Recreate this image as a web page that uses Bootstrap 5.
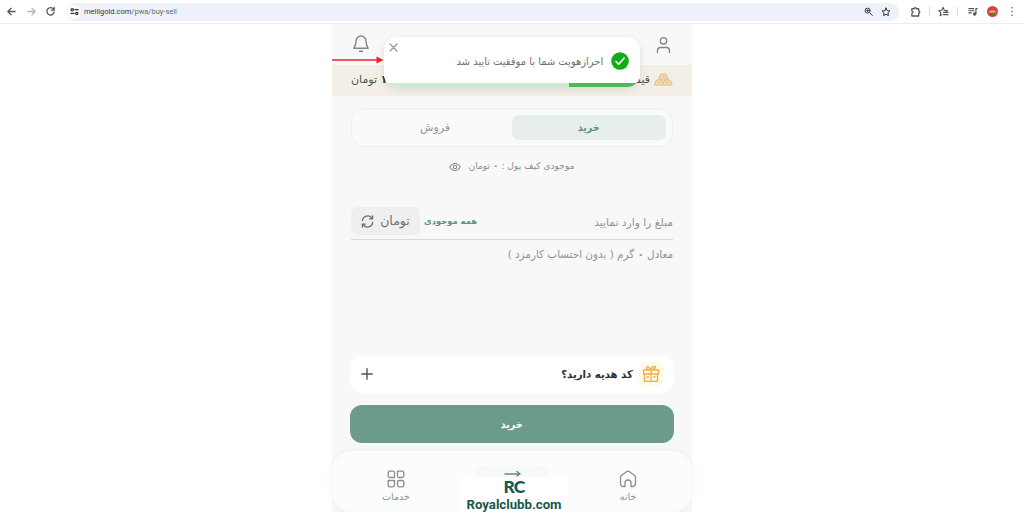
<!DOCTYPE html>
<html lang="fa">
<head>
<meta charset="utf-8">
<meta name="viewport" content="width=device-width, initial-scale=1">
<title>melligold</title>
<link href="https://cdn.jsdelivr.net/npm/bootstrap@5.3.0/dist/css/bootstrap.min.css" rel="stylesheet">
<script src="https://cdn.jsdelivr.net/npm/bootstrap@5.3.0/dist/js/bootstrap.bundle.min.js" defer></script>
<style>
body{height:512px;overflow:hidden;background:#fff;font-family:"DejaVu Sans",sans-serif;font-size:11px;line-height:1;color:#8a8a8a}
svg{display:block;flex:none;fill:none;stroke:currentColor;stroke-width:1.4;stroke-linecap:round;stroke-linejoin:round}
.chrome{height:24px;border-bottom:1px solid #ededee;color:#56585d;padding:0 7px 0 6px}
.address{height:18px;border-radius:9px;background:#edf1fa;margin-left:10px;padding:0 8px 0 1px;font:7.5px Roboto,sans-serif;color:#35363b}
.site-info{width:14px;height:14px;border-radius:50%;background:#fff;margin-right:3px}
.divider{width:1px;height:9px;background:#d4dae6}
.phone{width:360px;height:488px;background:#f8f8f8}
.topbar{height:41px;padding:0 20px;color:#858585}
.price{height:31px;background:#f3efe7;padding:0 19px 2px;color:#555}
.tabs{height:39px;margin:12px 19px 0;border:1px solid #eeefef;border-radius:13px;background:#f9fafa;padding:6px;color:#969696}
.tab-on{background:#e7efec;border-radius:7px;color:#5f9580}
.wallet{height:39px;font-size:9.1px;color:#8c8c8c;gap:7px}
.amount{height:33px;margin:21px 19px 0;border-bottom:1px solid #d8d8d8;color:#929292}
.unit{height:28px;width:69px;border-radius:7px;background:#efefef;color:#707070;font-size:12.500px;gap:6px}
.all{color:#5d927e;font-size:8.4px}
.equal{margin:0 19px;height:28px;color:#929292}
.gift{height:38px;margin:87px 18px 0;background:#fff;border-radius:13px;color:#303030;padding:0 11px 0 17px}
.gift-icon{width:24px;height:24px;background:#fff9e9;border-radius:6px;color:#f3ad40}
.buy{height:38px;margin:12px 18px 0;border-radius:12px;background:#6c9c89;color:#fff;border:0}
.bottom{height:61px;margin-top:8px;padding:15px 36px 0;background:#fbfdfc;border-radius:20px;box-shadow:0 0 8px #0000000c;color:#8c8c8c;font-size:9.500px}
.nav-cell{width:56px;gap:4px;padding-top:4px}
.trade{width:74px;height:46px;border-radius:10px;background:#f6f9f8;color:#5c927e;padding-top:4px}
.notice{left:384px;top:37px;width:256px;height:50px;border-radius:13px;background:#fff;box-shadow:0 2px 9px #0000001a;color:#707070;overflow:hidden;z-index:3;padding:0 11px 2px}
.bar{left:3px;right:4px;bottom:0;height:4px;background:#d0ecd0}
.bar i{display:block;width:67px;height:4px;background:#4bbd53;margin-left:auto}
.close-x{left:5px;top:6px;color:#999}
.pointer{left:332px;top:55px;z-index:4}
.stamp{left:461px;top:477px;width:106px;height:35px;background:#fff;color:#17584e;z-index:4;font:bold 13.2px/15px Roboto,sans-serif}
.monogram{font:900 17.500px/20px Lato,sans-serif;height:20px;letter-spacing:-.8px}
.fit{display:inline-block;white-space:nowrap}
.tight{transform:scaleX(.945);transform-origin:right}
.tighter{transform:scaleX(.92);transform-origin:right}
.mid{transform:scaleX(.86)}
</style>
</head>
<body class="position-relative">
<header class="chrome d-flex align-items-center">
 <svg width="11" height="11" viewBox="0 0 12 12"><path d="M10 6H2M5.500 2.500 2 6l3.500 3.500"/></svg>
 <svg style="margin-left:9px;color:#b5b6b8" width="11" height="11" viewBox="0 0 12 12"><path d="M2 6h8M6.500 2.500 10 6 6.500 9.500"/></svg>
 <svg style="margin-left:8px" width="11" height="11" viewBox="0 0 12 12"><path d="M9.300 3.500A4 4 0 1 0 10 6.500M10 1.500v3H7"/></svg>
 <div class="address flex-grow-1 d-flex align-items-center">
  <span class="site-info d-flex align-items-center justify-content-center"><svg width="9" height="9" viewBox="0 0 10 10"><circle cx="2.500" cy="3" r="1.300"/><path d="M5.500 3H9M1 7.200h3.500"/><circle cx="7.500" cy="7.200" r="1.300"/></svg></span>
  <span class="fit" dir="ltr">melligold.com<span style="color:#686b72">/pwa/buy-sell</span></span>
  <svg class="ms-auto" width="9" height="9" viewBox="0 0 10 10"><circle cx="4" cy="4" r="2.800" stroke-width="1.100"/><path stroke-width="1.100" d="M6.200 6.200 9.300 9.300M3 4h2M4 3v2"/></svg>
  <svg style="margin-left:8px" width="10" height="10" viewBox="0 0 12 12"><path stroke-width="1.200" d="m6 1.300 1.400 3 3.300.4-2.400 2.300.6 3.300L6 8.700l-2.900 1.600.6-3.300-2.400-2.300 3.300-.4z"/></svg>
 </div>
 <svg style="margin-left:11px" width="11" height="11" viewBox="0 0 12 12"><path d="M2 3h2.500a1.200 1.200 0 0 1 2.400 0H9.500v2.500a1.200 1.200 0 0 1 0 2.400v3H2V8a1.200 1.200 0 0 0 0-2.500z"/></svg>
 <span class="divider" style="margin-left:8px"></span>
 <svg style="margin-left:8px" width="11" height="11" viewBox="0 0 12 12"><path stroke-width="1.300" d="M4 9.500 2.400 10.500 3 7.200.9 5l3.200-.4L5.500 1.500l1.400 3.100 3.300.4-2 1.500M6 7h5M6 9.500h5"/></svg>
 <span class="divider" style="margin-left:8px"></span>
 <svg style="margin-left:10px" width="10" height="10" viewBox="0 0 12 12"><path d="M1 2h6M1 4.500h6M1 7h3M9.500 8V2H11"/><circle cx="8" cy="8.500" r="1.400" fill="currentColor"/></svg>
 <svg style="margin-left:9px" width="11" height="11" viewBox="0 0 12 12"><circle cx="6" cy="6" r="6" fill="#d8443a" stroke="none"/><path d="M1.500 7q4.500-5 9 0z" fill="#f8b468" stroke="none"/><path d="M2 8.500h8L8 11H4z" fill="#61753a" stroke="none"/></svg>
 <svg style="margin-left:9px" width="10" height="11" viewBox="0 0 10 12"><path stroke-width="1.700" d="M5 2v.01M5 6v.01M5 10v.01"/></svg>
</header>

<main class="phone mx-auto d-flex flex-column" dir="rtl">
 <div class="topbar flex-shrink-0 d-flex align-items-center justify-content-between">
  <svg width="17" height="18" viewBox="0 0 17 18"><circle cx="8.500" cy="4.800" r="3.200"/><path d="M2.500 16.500v-2q0-3 3-3h6q3 0 3 3v2"/></svg>
  <svg width="18" height="19" viewBox="0 0 18 19"><path d="M4 6a5 5 0 0 1 10 0c0 4 1 5.300 2.200 7.300H1.800C3 11.300 4 10 4 6zM7.500 16.200h3"/></svg>
 </div>
 <div class="price flex-shrink-0 d-flex align-items-center justify-content-between">
  <div class="d-flex align-items-center gap-1"><svg width="19" height="13" viewBox="0 0 19 13" style="color:#dfba82"><path fill="#f4dfbd" stroke-width="1" d="M7 1h5l2 5H5zM3 7h5l2 5H.8zM11 7h5l2.200 5H9.500zM8 3.500h3M4 9.500h3M12 9.500h3"/></svg><span class="fit">قیمت</span></div>
  <span class="fit"><b style="color:#333">۱۸</b> تومان</span>
 </div>
 <div class="tabs flex-shrink-0 d-flex"><div class="tab-on w-50 d-flex align-items-center justify-content-center fw-bold"><span class="fit mid">خرید</span></div><div class="w-50 d-flex align-items-center justify-content-center"><span class="fit">فروش</span></div></div>
 <div class="wallet flex-shrink-0 d-flex align-items-center justify-content-center"><span class="fit">موجودی کیف پول : <b>۰</b> تومان</span><svg width="12" height="10" viewBox="0 0 14 10"><path stroke-width="1.300" d="M.8 5C4-.5 10-.5 13.200 5 10 10.500 4 10.500.8 5z"/><circle cx="7" cy="5" r="2" stroke-width="1.300"/></svg></div>
 <div class="amount flex-shrink-0 d-flex align-items-start"><span class="fit" style="margin-top:11px;font-size:10.700px">مبلغ را وارد نمایید</span><span class="fit all fw-bold me-auto" style="margin-top:10px;margin-left:4px">همه موجودی</span><span class="unit d-flex align-items-center justify-content-center"><span class="fit">تومان</span><svg width="13" height="13" viewBox="0 0 14 14"><path d="M1.500 6A5.600 5.600 0 0 1 12 4M12.500 1v3.200H9.300M12.500 8A5.600 5.600 0 0 1 2 10M1.500 13V9.800h3.200"/></svg></span></div>
 <div class="equal flex-shrink-0 d-flex align-items-center"><span class="fit tight">معادل <b>۰</b> گرم ( بدون احتساب کارمزد )</span></div>
 <div class="gift flex-shrink-0 d-flex align-items-center"><span class="gift-icon d-flex align-items-center justify-content-center"><svg width="18" height="18" viewBox="0 0 18 18"><path stroke-width="1.300" d="M1.500 5h15v4h-15zM2.500 9v7.300h13V9M9 5v11.300M9 5Q4 5 4.500 2.500T9 5q0-4 3.500-3.300T9 5M5 12h1.500M11.500 12H13"/></svg></span><b class="fit tighter" style="margin-right:6px">کد هدیه دارید؟</b><svg class="me-auto" style="margin-left:-6px;color:#555" width="12" height="12" viewBox="0 0 12 12"><path d="M6 .8v10.400M.8 6h10.400"/></svg></div>
 <button class="buy flex-shrink-0 fw-bold"><span class="fit mid">خرید</span></button>
 <nav class="bottom flex-shrink-0 d-flex align-items-start justify-content-between">
  <div class="nav-cell d-flex flex-column align-items-center"><svg width="18" height="18" viewBox="0 0 18 18"><path stroke-width="1.300" d="M6 16.500H4.500q-3 0-3-3V7.500Q1.500 6 3 5l4.500-3.300q1.500-1 3 0L15 5q1.500 1 1.500 2.500v6q0 3-3 3H12v-3.500q0-3-3-3t-3 3z"/></svg><span class="fit">خانه</span></div>
  <div class="trade d-flex justify-content-center"><svg width="17" height="8" viewBox="0 0 17 8"><path stroke-width="1.500" d="M1 4h15l-3-2.500M16 4l-3 2"/></svg></div>
  <div class="nav-cell d-flex flex-column align-items-center"><svg width="18" height="18" viewBox="0 0 18 18"><path stroke-width="1.300" d="M3 1.200h3q1.500 0 1.500 1.500v4.800H3Q1.200 7.500 1.200 6V3Q1.200 1.200 3 1.200zM10.500 1.200H15q1.800 0 1.800 1.800v3q0 1.500-1.800 1.500h-3q-1.500 0-1.500-1.500zM1.200 10.500h6.300V15q0 1.800-1.800 1.800H3Q1.200 16.800 1.200 15zM12 10.500h3q1.800 0 1.800 1.500v3q0 1.800-1.800 1.800h-3q-1.500 0-1.500-1.800v-3q0-1.500 1.500-1.500z"/></svg><span class="fit">خدمات</span></div>
 </nav>
</main>

<div class="notice position-absolute d-flex align-items-center" dir="rtl">
 <svg width="18" height="18" viewBox="0 0 18 18"><circle cx="9" cy="9" r="8.800" fill="#10ad16" stroke="none"/><path d="m5 9.500 2.700 2.700 5.300-6" stroke="#fff" stroke-width="1.700"/></svg>
 <span class="fit tight" style="margin-right:8px;font-size:10.500px">احرازهویت شما با موفقیت تایید شد</span>
 <svg class="close-x position-absolute" width="9" height="9" viewBox="0 0 9 9"><path d="m1 1 7 7M8 1 1 8"/></svg>
 <div class="bar position-absolute"><i></i></div>
</div>
<svg class="pointer position-absolute" width="52" height="10" viewBox="0 0 52 10"><path d="M0 5h46" stroke="#ed2024" stroke-width="1.600" stroke-linecap="butt"/><path d="m44.500 1.500 7 3.500-7 3.500z" fill="#ed2024" stroke="none"/></svg>
<div class="stamp position-absolute d-flex flex-column align-items-center" dir="ltr"><span class="monogram">RC</span><span class="fit">Royalclubb.com</span></div>
</body>
</html>
